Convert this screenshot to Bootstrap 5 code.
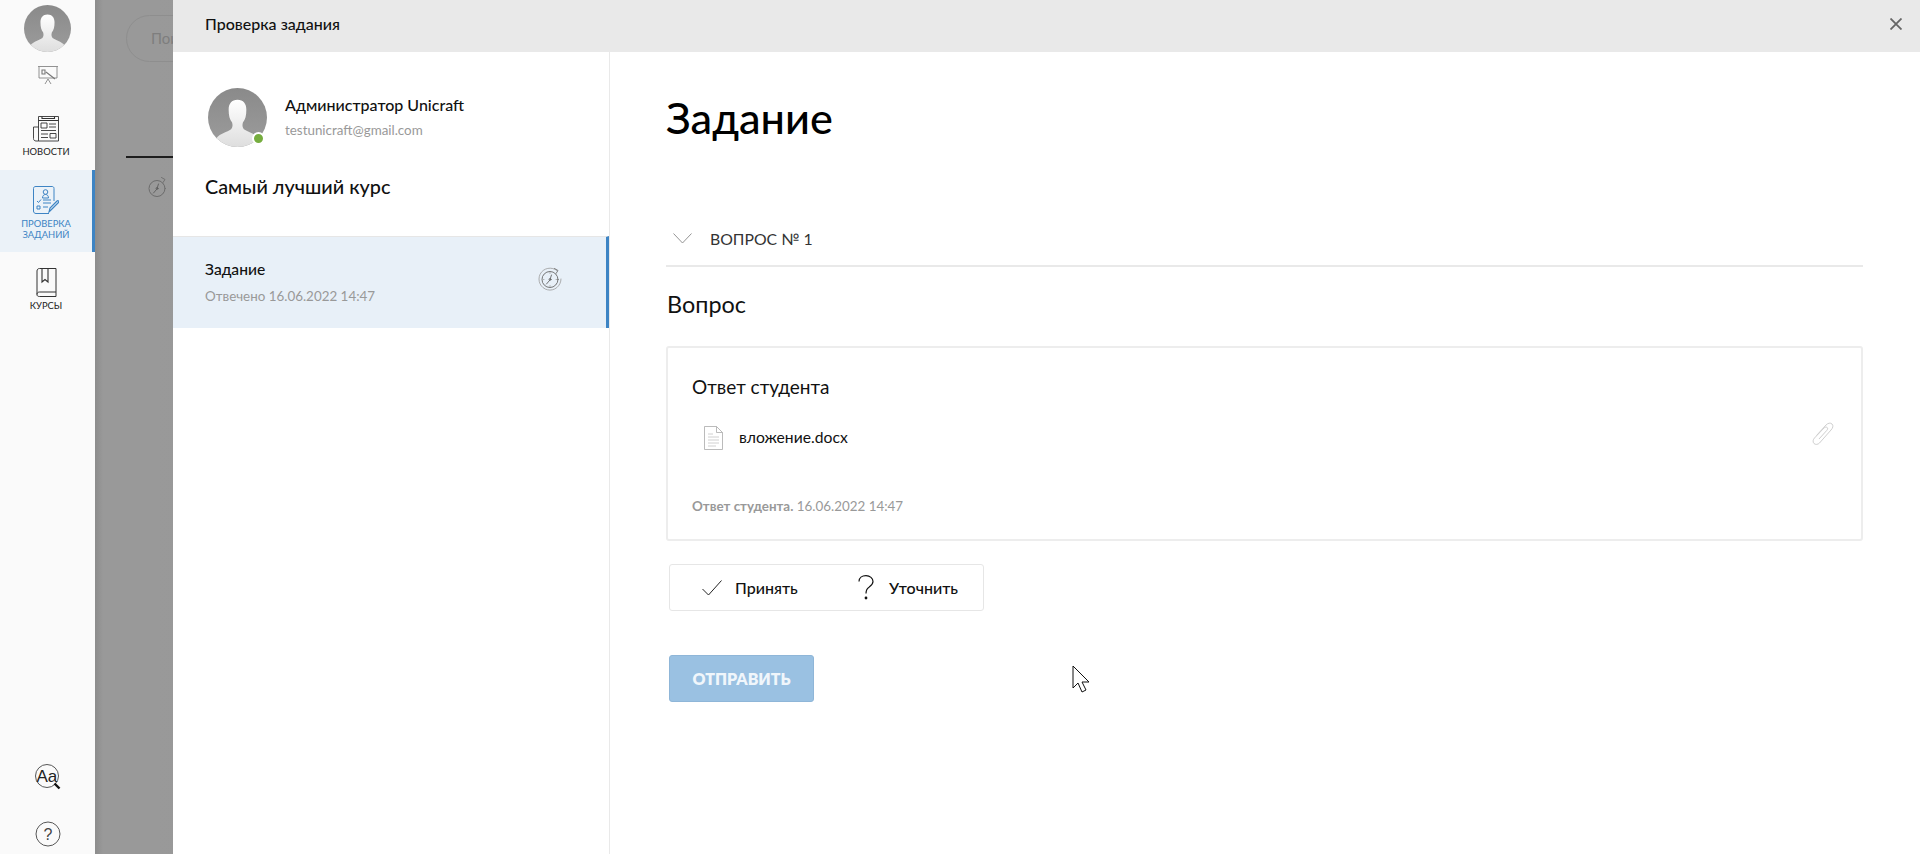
<!DOCTYPE html>
<html lang="ru">
<head>
<meta charset="utf-8">
<title>Проверка задания</title>
<link href="https://cdn.jsdelivr.net/npm/bootstrap@5.3.0/dist/css/bootstrap.min.css" rel="stylesheet">
<style>
html,body{height:100%;overflow:hidden}
body{font-family:Lato,"Open Sans","Noto Sans",sans-serif;color:#111;background:#fff}
.shell{height:854px;width:1920px;position:relative}
.rail{width:95px;background:#fafafa;flex:none}
.rail-avatar{width:47px;height:47px;margin-top:5px}
.rail-present{margin-top:13px;height:20px}
.rail-item{width:95px;text-align:center;font-size:9.4px;line-height:11px;font-weight:400;color:#222;text-transform:uppercase;padding-right:3px}
.rail-news{margin-top:30px;height:48px}
.rail-news svg{display:block;margin:0 auto 4px}
.rail-courses svg{display:block;margin:0 auto 3px}
.rail-check{margin-top:7px;height:82px;background:#ebf2f8;border-right:3px solid #3d84c4;color:#3d84c4;padding:16px 0 0}
.rail-check svg{display:block;margin:0 auto 4px}
.rail-courses{margin-top:16px}
.rail-bottom{margin-bottom:7px;gap:31px}
.backdrop{flex:1;background:linear-gradient(90deg,#8c8c8c 0,#999 8px,#999 60px,#7f7f7f 100%);min-width:0;position:relative}
.bg-search{margin:15px 0 0 31px;height:47px;width:200px;border:1px solid #8e8e8e;border-radius:24px;padding:0 24px;line-height:45px;font-size:15px;color:#7e7e7e}
.bg-line{margin:94px 0 0 31px;height:2px;background:#1d1d1d}
.bg-clock{margin:18px 0 0 50px;display:block}
.sheet{position:absolute;left:173px;top:0;right:0;bottom:0;background:#fff;display:flex;flex-direction:column}
.sheet-head{height:52px;background:#e9e9e9;padding:0 18px 5px 32px;font-size:16px;font-weight:500;flex:none}
.sheet-body{flex:1;min-height:0}
.task-side{width:437px;border-right:1px solid #e9e9e9;flex:none}
.who{padding:36px 0 0 35px;gap:18px}
.who-pic{width:59px;height:59px;position:relative;flex:none}
.online{position:absolute;left:44px;top:44px;width:13px;height:13px;border-radius:50%;background:#76ad3f;border:2px solid #fff;box-sizing:border-box}
.who-name{font-size:16px;font-weight:500;line-height:20px;margin-top:7px}
.who-mail{font-size:13.4px;color:#999;line-height:18px;margin-top:6px}
.course-name{font-size:19.8px;font-weight:500;line-height:26px;margin:26px 0 0 32px;height:36px}
.task-row{margin-top:27px;height:92px;background:#e8f0f8;border-top:1px solid #e6e6e6;border-right:3px solid #3d84c4;padding:22px 44px 0 32px}
.task-title{font-size:15.6px;font-weight:500;line-height:20px}
.task-sub{font-size:13.4px;color:#999;line-height:18px;margin-top:8px}
.task-clock{margin-top:8px}
.task-main{flex:1;padding:0 57px 0 56px;min-width:0}
.main-title{font-size:43.2px;font-weight:500;line-height:52px;margin:39px 0 0 0;color:#000}
.q-head{height:50px;margin-top:74px;border-bottom:2px solid #e9e9e9;font-size:15.8px;color:#333;padding:0 0 5px 7px;gap:18px}
.q-title{font-size:23.4px;font-weight:400;line-height:30px;margin:22px 0 0 1px}
.answer{margin-top:27px;height:195px;border:2px solid #ededed;border-radius:3px;padding:25px 24px 0 24px}
.answer-title{font-size:19px;line-height:28px;font-weight:400}
.attach{margin:25px 0 0 12px;gap:16px;font-size:15.7px;height:24px}
.attach-clip{position:absolute;right:27px;top:73px}
.answer-foot{font-size:13.4px;color:#999;line-height:18px;margin-top:47px}
.answer-foot b{font-weight:700}
.verdict{margin:23px 0 0 3px;width:315px;height:47px;border:1px solid #e6e6e6;border-radius:3px;padding:0 25px 0 32px}
.verdict .btn{--bs-btn-padding-x:0;--bs-btn-padding-y:0;--bs-btn-font-size:16px;--bs-btn-font-weight:500;--bs-btn-color:#111;--bs-btn-border-width:0}
.verdict-ok{gap:13px}
.verdict-ask{gap:15px}
.send{margin:44px 0 0 3px;width:145px;height:47px;--bs-btn-bg:#9ac1e2;--bs-btn-disabled-bg:#9ac1e2;--bs-btn-disabled-border-color:#8fb6d8;--bs-btn-disabled-opacity:1;--bs-btn-disabled-color:#f0f6fb;--bs-btn-border-radius:3px;--bs-btn-font-weight:800;--bs-btn-font-size:16px;text-transform:uppercase}
.pointer{position:absolute;left:899px;top:665px}
</style>
</head>
<body>
<svg width="0" height="0" class="d-block" style="position:absolute">
<defs>
<linearGradient id="gAv" x1="0" y1="0" x2="0" y2="1"><stop offset="0" stop-color="#8a8a8a"/><stop offset="1" stop-color="#9c9c9c"/></linearGradient>
<linearGradient id="gBody" x1="0" y1="0" x2="0" y2="1"><stop offset="0" stop-color="#ffffff"/><stop offset="1" stop-color="#dedede"/></linearGradient>
<clipPath id="cAv"><circle cx="30" cy="30" r="30"/></clipPath>
<symbol id="avatar" viewBox="0 0 60 60">
<circle cx="30" cy="30" r="30" fill="url(#gAv)"/>
<g clip-path="url(#cAv)"><path d="M30 12c-6 0-9 4-9 10 0 6 1 10 3.500 13 .8 3 .5 5-1 7-4 3-11 4-15 9-2 3-2 9-2 9h47s0-6-2-9c-4-5-11-6-15-9-1.500-2-1.800-4-1-7 2.500-3 3.500-7 3.500-13 0-6-3-10-9-10z" fill="url(#gBody)"/></g>
</symbol>
<symbol id="stopwatch" viewBox="0 0 24 24">
<g fill="none" stroke-linecap="round">
<path d="M19 3.600A11 11 0 1 0 23 12" stroke="#999" stroke-width=".8"/>
<circle cx="12" cy="12.500" r="8" stroke="#666" stroke-width=".9"/>
<path d="M12 12.500 13.500 8M11.500 13.500 8.500 17" stroke="#555" stroke-width=".8"/>
<circle cx="12" cy="12.500" r="1" stroke="#555" stroke-width=".7"/>
<path d="M16.500 1.500 20 3.500 18 6.500" stroke="#666" stroke-width=".8"/>
<path d="M12 5.500v1M12 18.500v1M5 12.500h1M18 12.500h1" stroke="#999" stroke-width=".7"/>
</g>
</symbol>
</defs>
</svg>
<div class="shell d-flex">
  <nav class="rail d-flex flex-column align-items-center">
    <svg class="rail-avatar"><use href="#avatar"/></svg>
    <svg class="rail-present" width="20" height="20" viewBox="0 0 20 20" fill="none" stroke="#777" stroke-width=".8">
      <path d="M0 1.500h20M1 2v11h18V2M10 14l-3 5M10 14l3 5" />
      <path d="M4 5h3v4H4zM8 7l9 7" stroke-width="1.100"/>
    </svg>
    <a class="rail-item rail-news text-decoration-none">
      <svg width="26" height="27" viewBox="0 0 26 27" fill="none" stroke="#333" stroke-width=".9">
        <path d="M5.500 1.500h20V26H5.500zM5.500 26H3c-1.500 0-2.500-1-2.500-2.500V12h5"/>
        <path d="M9 1.500v2h12.500v-2M5.500 5.500h20" stroke-width="1.100"/>
        <path d="M8 8h6v5H8zM16 9h7M16 12h7M8 15.500h15M8 19h7M8 22.500h7M17 18.500h6v4.500h-6z"/>
      </svg>
      Новости
    </a>
    <a class="rail-item rail-check text-decoration-none">
      <svg width="26" height="28" viewBox="0 0 26 28" fill="none" stroke="#3d84c4" stroke-width="1">
        <path d="M21 15V2.500C21 1 20 .5 19 .5H3C1.500.5.500 1 .500 2.500V25c0 1.500 1 2.500 2.500 2.500h13"/>
        <circle cx="12.500" cy="6" r="2.300"/><path d="M9.500 12c0-2.500 1.500-3.500 3-3.500s3 1 3 3.500z"/>
        <path d="M4 15l1.500 1.500L8 13.500M10 14h8M10 17h8M4 20h3v3H4zM10 21h5"/>
        <path d="M16 26l1-4 7-7c1-1 2.500.5 1.500 1.500l-7 7z" fill="#d8e7f4" stroke-width="1.100"/>
      </svg>
      Проверка<br>заданий
    </a>
    <a class="rail-item rail-courses text-decoration-none">
      <svg width="21" height="29" viewBox="0 0 21 29" fill="none" stroke="#333" stroke-width="1">
        <path d="M1 3c0-1.500 1-2.500 2.500-2.500H20V24H3.500C2 24 1 25 1 26.500zM1 26.500C1 28 2 28.500 3.500 28.500H20V24"/>
        <path d="M6 .5V14l3-2.500 3 2.500V.5" stroke-width="1.100"/>
      </svg>
      Курсы
    </a>
    <div class="rail-bottom mt-auto d-flex flex-column align-items-center">
      <svg width="26" height="26" viewBox="0 0 26 26" fill="none">
        <circle cx="12" cy="12" r="11.500" stroke="#444" stroke-width=".9"/>
        <text x="1.500" y="17.500" font-family="Liberation Sans, sans-serif" font-size="17" fill="#222">Aa</text>
        <path d="M19.500 19.500l5 5" stroke="#111" stroke-width="2.400"/>
      </svg>
      <svg width="26" height="26" viewBox="0 0 26 26" fill="none">
        <circle cx="13" cy="13" r="12" stroke="#444" stroke-width=".9"/>
        <text x="13" y="19" text-anchor="middle" font-family="Liberation Sans, sans-serif" font-size="16" fill="#444">?</text>
      </svg>
    </div>
  </nav>
  <div class="backdrop">
    <div class="bg-search">Поиск</div>
    <div class="bg-line"></div>
    <svg class="bg-clock" width="24" height="24"><use href="#stopwatch"/></svg>
  </div>
  <section class="sheet">
    <header class="sheet-head d-flex align-items-center justify-content-between">
      <span>Проверка задания</span>
      <svg width="12" height="12" viewBox="0 0 12 12" stroke="#666" stroke-width="1.800"><path d="M.5.5l11 11M11.500.5l-11 11"/></svg>
    </header>
    <div class="sheet-body d-flex">
      <aside class="task-side">
        <div class="who d-flex">
          <div class="who-pic">
            <svg width="59" height="59"><use href="#avatar"/></svg>
            <span class="online"></span>
          </div>
          <div>
            <div class="who-name">Администратор Unicraft</div>
            <div class="who-mail">testunicraft@gmail.com</div>
          </div>
        </div>
        <div class="course-name">Самый лучший курс</div>
        <div class="task-row d-flex justify-content-between">
          <div>
            <div class="task-title">Задание</div>
            <div class="task-sub">Отвечено 16.06.2022 14:47</div>
          </div>
          <svg class="task-clock" width="24" height="24"><use href="#stopwatch"/></svg>
        </div>
      </aside>
      <main class="task-main">
        <h1 class="main-title">Задание</h1>
        <div class="q-head d-flex align-items-center">
          <svg width="19" height="11" viewBox="0 0 19 11" fill="none" stroke="#888" stroke-width=".9"><path d="M.5.5l9 9.500 9-9.500"/></svg>
          <span>ВОПРОС № 1</span>
        </div>
        <h2 class="q-title">Вопрос</h2>
        <div class="answer position-relative">
          <div class="answer-title">Ответ студента</div>
          <div class="attach d-flex align-items-center">
            <svg width="19" height="24" viewBox="0 0 19 24" fill="none" stroke="#aaa" stroke-width=".8">
              <path d="M.5.5h12l6 6v17H.5zM12.500.5v6h6"/>
              <path d="M4 8h5M4 11h11M4 14h11M4 17h11M4 20h8" stroke="#c4c4c4"/>
            </svg>
            <span>вложение.docx</span>
          </div>
          <svg class="attach-clip" width="23" height="25" viewBox="0 0 23 25" fill="none" stroke="#cfcfcf" stroke-width="1">
            <path d="M5.500 14.500 15 4c2-2 4.500-2.500 6-1s1 4-1 6L8.500 22c-1.500 1.500-4 2-5.500.500s-1-4 .5-5.500L13 7c1-1 2.500-1.200 3.200-.5s.5 2-.5 3L8 18"/>
          </svg>
          <div class="answer-foot"><b>Ответ студента.</b> 16.06.2022 14:47</div>
        </div>
        <div class="verdict d-flex align-items-center justify-content-between">
          <button type="button" class="btn verdict-ok d-flex align-items-center">
            <svg width="20" height="16" viewBox="0 0 20 16" fill="none" stroke="#222" stroke-width="1"><path d="M.5 9l6 6L19.500.5"/></svg>
            Принять
          </button>
          <button type="button" class="btn verdict-ask d-flex align-items-center">
            <svg width="16" height="25" viewBox="0 0 16 25" fill="none" stroke="#111" stroke-width="1.200"><path d="M1 6.500C1 3 4 .7 8 .7s7 2.500 7 5.800c0 3-2 4.300-4 5.700-2 1.300-3 2.800-3 6.300"/><circle cx="8" cy="23" r="1.400" fill="#111" stroke="none"/></svg>
            Уточнить
          </button>
        </div>
        <button type="button" class="btn btn-primary send" disabled>Отправить</button>
      </main>
    </div>
    <svg class="pointer" width="19" height="29" viewBox="0 0 19 29" fill="#fff" stroke="#111" stroke-width="1"><path d="M1 1v22l5-5 4 9 4-2-4-8h7z"/></svg>
  </section>
</div>
<script src="https://cdn.jsdelivr.net/npm/bootstrap@5.3.0/dist/js/bootstrap.bundle.min.js"></script>
</body>
</html>
